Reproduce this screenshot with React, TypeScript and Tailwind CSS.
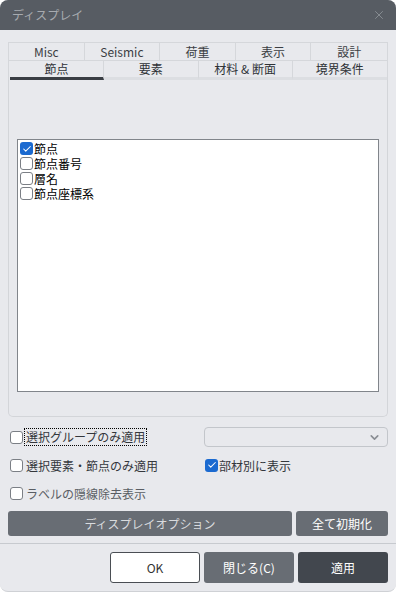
import { Check, ChevronDown, X } from 'lucide-react'

const jp = "font-['Noto_Sans_CJK_JP','Noto_Sans',sans-serif]"

function Box({ checked = false }: { checked?: boolean }) {
    return checked ? (
        <span className="flex h-[13px] w-[13px] shrink-0 items-center justify-center rounded-[3px] bg-[#1b6ad0]">
            <Check size={10} strokeWidth={2.5} className="text-white" />
        </span>
    ) : (
        <span className="h-[13px] w-[13px] shrink-0 rounded-[3px] border border-[#7b7f85] bg-white" />
    )
}

export default function App() {
    const topTabs = ['Misc', 'Seismic', '荷重', '表示', '設計']
    const subTabs = ['節点', '要素', '材料 & 断面', '境界条件']
    const items = ['節点', '節点番号', '層名', '節点座標系']

    return (
        <div className={`h-[592px] w-[396px] bg-white ${jp}`}>
            <div className="flex h-full flex-col overflow-hidden rounded-lg border-b border-[#cfd1d5] bg-[#e8e9ed]">
                {/* Title bar */}
                <div className="flex h-[30px] shrink-0 items-center justify-between bg-[#575c63] pl-3 pr-[10px]">
                    <span className="text-[12px] leading-[14px] text-[#a7abb0]">ディスプレイ</span>
                    <X size={14} strokeWidth={1.5} className="text-[#8d9298]" />
                </div>

                <div className="flex flex-col px-2 pt-3">
                    {/* Tabs */}
                    <div className="grid h-[19px] grid-cols-5 border border-[#d5d7db] text-[12px] leading-[17px] text-[#3b3e43]">
                        {topTabs.map((t, i) => (
                            <div key={t} className={`text-center ${i < 4 ? 'border-r border-[#d5d7db]' : ''}`}>{t}</div>
                        ))}
                    </div>
                    <div className="grid h-[19px] grid-cols-4 border-x border-[#d5d7db] pl-px text-[12px] leading-[16px] text-[#2f3237]">
                        {subTabs.map((t, i) => (
                            <div key={t} className={`text-center ${i === 0 ? 'border-b-[3px] border-[#3a3e44]' : 'border-b-[3px] border-[#dcdee2]'} ${i < 3 ? 'border-r border-r-[#d5d7db]' : ''}`}>{t}</div>
                        ))}
                    </div>

                    {/* Panel */}
                    <div className="flex h-[337px] flex-col rounded-b-[5px] border border-t-0 border-[#d3d5d9] px-2 pt-[59px]">
                        <div className="h-[253px] border border-[#81858b] bg-white px-[2px] pt-px">
                            {items.map((t, i) => (
                                <div key={t} className="flex h-[15px] items-center gap-px overflow-hidden text-[12px] leading-[15px] text-black">
                                    <Box checked={i === 0} />
                                    <span>{t}</span>
                                </div>
                            ))}
                        </div>
                    </div>

                    {/* Options */}
                    <div className="mt-[10px] grid grid-cols-[196px_1fr] gap-y-2 text-[12px] leading-[15px] text-[#34373c]">
                        <div className="flex h-5 items-center pl-[2px]">
                            <Box />
                            <span className="ml-px border border-dotted border-black px-px leading-[16px]">選択グループのみ適用</span>
                        </div>
                        <div className="flex h-5 items-center justify-end rounded-[4px] border border-[#c3c6cb] pr-[6px]">
                            <ChevronDown size={13} strokeWidth={3} className="text-[#8a8e94]" />
                        </div>
                        <div className="flex h-5 items-center gap-[3px] pl-[2px]">
                            <Box />
                            <span>選択要素・節点のみ適用</span>
                        </div>
                        <div className="flex h-5 items-center gap-px pl-px">
                            <Box checked />
                            <span>部材別に表示</span>
                        </div>
                        <div className="flex h-5 items-center gap-[3px] pl-[2px]">
                            <Box />
                            <span className="text-[#5a5e64]">ラベルの隠線除去表示</span>
                        </div>
                    </div>

                    <div className="mt-2 flex gap-1">
                        <div className="flex h-[25px] flex-1 items-center justify-center rounded-[3px] bg-[#686d74] text-[12px] text-[#d9dbde]">ディスプレイオプション</div>
                        <div className="flex h-[25px] w-[92px] items-center justify-center rounded-[3px] bg-[#686d74] text-[12px] text-white">全て初期化</div>
                    </div>
                </div>

                <div className="mt-[7px] border-t border-[#c7cacf]" />

                <div className="flex justify-end gap-1 px-2 pt-2">
                    <div className="flex h-[31px] w-[90px] items-center justify-center rounded-[3px] border border-[#4a4e54] bg-white text-[12px] text-[#333]">OK</div>
                    <div className="flex h-[31px] w-[90px] items-center justify-center rounded-[3px] bg-[#686d74] text-[12px] text-white">閉じる(C)</div>
                    <div className="flex h-[31px] w-[90px] items-center justify-center rounded-[3px] bg-[#42474e] text-[12px] text-white">適用</div>
                </div>
            </div>
        </div>
    )
}
